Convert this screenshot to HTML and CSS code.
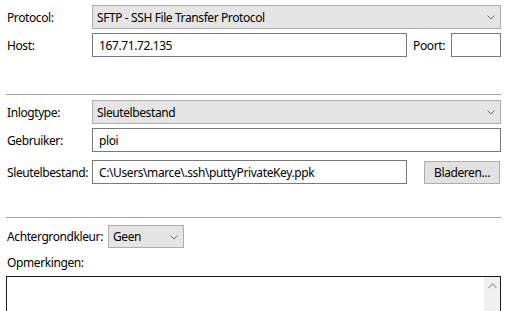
FILE: index.html
```html
<!DOCTYPE html>
<html>
<head>
    <meta charset="UTF-8">
    <title>Site beheer</title>
    <link rel="stylesheet" href="styles.css">
</head>
<body>
    <div class="panel">
        <div class="row first">
            <label class="lbl">Protocol:</label>
            <div class="combo">
                <span>SFTP - SSH File Transfer Protocol</span>
                <svg class="chev" width="8" height="5" viewBox="0 0 8 5"><path d="M0.5 0.5 L4 4 L7.5 0.5" fill="none" stroke="#6a6a6a" stroke-width="1"/></svg>
            </div>
        </div>
        <div class="row">
            <label class="lbl">Host:</label>
            <div class="split">
                <input class="field grow" type="text" value="167.71.72.135">
                <label class="lbl-inline">Poort:</label>
                <input class="field port" type="text">
            </div>
        </div>

        <div class="sep sep-top"></div>

        <div class="row">
            <label class="lbl">Inlogtype:</label>
            <div class="combo">
                <span>Sleutelbestand</span>
                <svg class="chev" width="8" height="5" viewBox="0 0 8 5"><path d="M0.5 0.5 L4 4 L7.5 0.5" fill="none" stroke="#6a6a6a" stroke-width="1"/></svg>
            </div>
        </div>
        <div class="row">
            <label class="lbl">Gebruiker:</label>
            <input class="field" type="text" value="ploi">
        </div>
        <div class="row wide-gap">
            <label class="lbl">Sleutelbestand:</label>
            <div class="split">
                <input class="field grow" type="text" value="C:\Users\marce\.ssh\puttyPrivateKey.ppk">
                <button class="btn">Bladeren...</button>
            </div>
        </div>

        <div class="sep sep-bottom"></div>

        <div class="color-row">
            <label class="lbl-inline">Achtergrondkleur:</label>
            <div class="combo small">
                <span>Geen</span>
                <svg class="chev" width="8" height="5" viewBox="0 0 8 5"><path d="M0.5 0.5 L4 4 L7.5 0.5" fill="none" stroke="#6a6a6a" stroke-width="1"/></svg>
            </div>
        </div>
        <div class="notes-label">Opmerkingen:</div>
        <div class="notes">
            <div class="scroll">
                <svg width="9" height="6" viewBox="0 0 9 6"><path d="M0.5 5 L4.5 1 L8.5 5" fill="none" stroke="#a8a8a8" stroke-width="1.3"/></svg>
            </div>
        </div>
    </div>
</body>
</html>
```

FILE: styles.css
```css
body {
    margin: 0;
    background: #fff;
    font-family: "Noto Sans", "Open Sans", sans-serif;
    font-size: 12px;
    letter-spacing: -0.4px;
    color: #000;
}

.panel {
    box-sizing: border-box;
    height: 311px;
    overflow: hidden;
    padding: 5px 7px 0 6px;
}

.row {
    display: grid;
    grid-template-columns: 86px 1fr;
    align-items: center;
    height: 24px;
    margin-top: 4px;
}

.row.first {
    margin-top: 0;
}

.row.wide-gap {
    margin-top: 8px;
}

.lbl {
    padding-left: 1px;
    white-space: nowrap;
}

.lbl-inline {
    white-space: nowrap;
    padding-left: 1px;
}

.combo {
    display: flex;
    align-items: center;
    justify-content: space-between;
    box-sizing: border-box;
    height: 24px;
    padding: 0 5px 0 4px;
    background: #e5e5e5;
    border: 1px solid #adadad;
}

.combo.small {
    width: 76px;
    height: 23px;
}

.chev {
    margin-top: 1px;
}

.field {
    box-sizing: border-box;
    width: 100%;
    height: 24px;
    margin: 0;
    padding: 0 6px;
    border: 1px solid #7a7a7a;
    background: #fff;
    font-family: inherit;
    font-size: 12px;
    letter-spacing: -0.4px;
    color: #000;
    outline: none;
}

.split {
    display: flex;
    align-items: center;
}

.split .grow {
    flex: 1;
}

.split .lbl-inline {
    margin: 0 6px 0 5px;
}

.field.port {
    width: 50px;
    flex: none;
}

.btn {
    box-sizing: border-box;
    width: 76px;
    height: 23px;
    margin: 0 1px 0 17px;
    padding: 0;
    background: #e1e1e1;
    border: 1px solid #adadad;
    font-family: inherit;
    font-size: 12px;
    letter-spacing: -0.4px;
    color: #000;
}

.sep {
    height: 1px;
    background: #a0a0a0;
}

.sep-top {
    margin: 37px 0 5px;
}

.sep-bottom {
    margin: 33px 0 7px;
}

.color-row {
    display: flex;
    align-items: center;
    gap: 5px;
    height: 23px;
}

.notes-label {
    padding-left: 1px;
    margin-top: 6px;
    height: 17px;
    line-height: 17px;
}

.notes {
    display: flex;
    justify-content: flex-end;
    box-sizing: border-box;
    height: 60px;
    margin-top: 5px;
    border: 1px solid #1a1a1a;
}

.scroll {
    width: 16px;
    background: #f0f0f0;
    display: flex;
    justify-content: center;
    padding-top: 6px;
    box-sizing: border-box;
}

.scroll svg {
    display: block;
}
```
